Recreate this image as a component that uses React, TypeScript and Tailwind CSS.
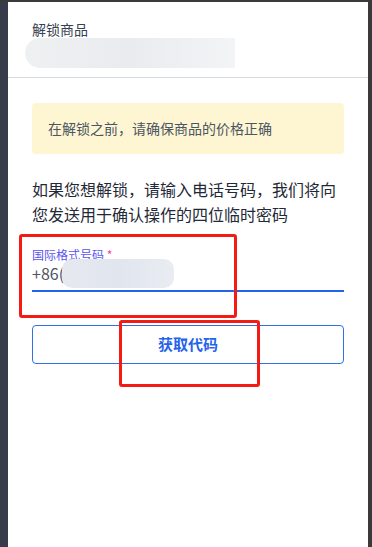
import React from "react";

export default function App() {
  const font = { fontFamily: '"Noto Sans CJK SC", "Noto Sans", sans-serif' };
  return (
    <div className="w-[372px] h-[547px] bg-[#3a3a3a] pt-[2px] pr-[4px] flex overflow-hidden" style={font}>
      <div className="w-[8px] bg-[#363c49] shrink-0" />
      <div className="relative flex-1 bg-white flex flex-col">
        <div className="h-[76px] border-b border-[#d8dde3] px-[24px] pt-[18px]">
          <div className="text-[14px] leading-[19px] text-[#374151]">解锁商品</div>
          <div className="-ml-[7px] -mt-[1px] h-[30px] w-[210px] rounded-l-full bg-gradient-to-r from-[#eef0f2] via-[#e9ebee] to-[#f3f4f6]" />
        </div>
        <div className="px-[24px] pt-[25px]">
          <div className="h-[51px] rounded-[4px] bg-[#fef6d2] flex items-center px-[16px] text-[14px] text-[#4b5563]">
            在解锁之前，请确保商品的价格正确
          </div>
          <p className="mt-[23px] text-[16px] leading-[25px] text-[#1f2937]">
            如果您想解锁，请输入电话号码，我们将向您发送用于确认操作的四位临时密码
          </p>
          <div className="mt-[20px] border-b-2 border-[#2563eb]">
            <div className="text-[12px] leading-[15px] text-[#5a55ee]">
              国际格式号码 <span className="text-[#ec4899]">*</span>
            </div>
            <div className="flex items-start h-[28px]">
              <span className="text-[16px] leading-[20px] mt-[1px] text-[#4b5563]">+86(</span>
              <div className="-ml-[2px] -mt-[3px] h-[29px] w-[112px] rounded-[10px] bg-gradient-to-r from-[#e6e9ef] via-[#e1e5ee] to-[#e9ecf2]" />
            </div>
          </div>
          <button className="mt-[33px] w-full h-[39px] rounded-[4px] border border-[#2f6fe8] text-[15px] font-bold text-[#2563eb]">
            获取代码
          </button>
        </div>
        <div className="absolute left-[11px] top-[232px] w-[218px] h-[84px] border-[3px] border-[#f21c14] rounded-[3px]" />
        <div className="absolute left-[111px] top-[318px] w-[141px] h-[67px] border-[3px] border-[#f21c14] rounded-[3px]" />
      </div>
    </div>
  );
}
